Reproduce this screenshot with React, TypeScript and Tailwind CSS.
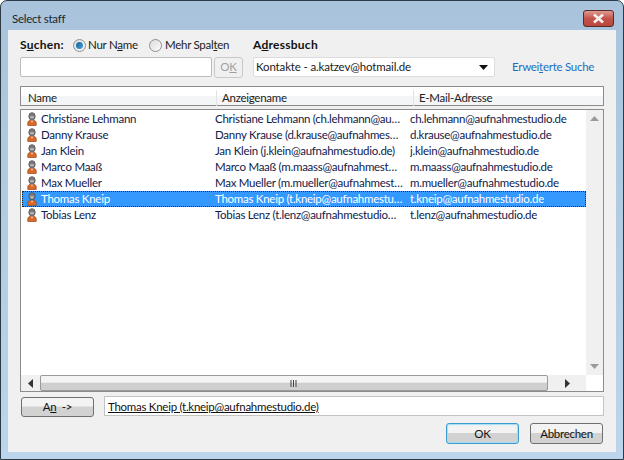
import React from "react";

const rows = [
  ["Christiane Lehmann", "Christiane Lehmann (ch.lehmann@au…", "ch.lehmann@aufnahmestudio.de"],
  ["Danny Krause", "Danny Krause (d.krause@aufnahmes…", "d.krause@aufnahmestudio.de"],
  ["Jan Klein", "Jan Klein (j.klein@aufnahmestudio.de)", "j.klein@aufnahmestudio.de"],
  ["Marco Maaß", "Marco Maaß (m.maass@aufnahmest…", "m.maass@aufnahmestudio.de"],
  ["Max Mueller", "Max Mueller (m.mueller@aufnahmest…", "m.mueller@aufnahmestudio.de"],
  ["Thomas Kneip", "Thomas Kneip (t.kneip@aufnahmestu…", "t.kneip@aufnahmestudio.de"],
  ["Tobias Lenz", "Tobias Lenz (t.lenz@aufnahmestudio…", "t.lenz@aufnahmestudio.de"],
];

function Person() {
  return (
    <svg width="12" height="14" viewBox="0 0 12 15" className="shrink-0">
      <path d="M1.5 14.5 V11.5 C1.5 9.8 3 9 4.5 8.8 H7.5 C9 9 10.5 9.8 10.5 11.5 V14.5 Z" fill="#d9682a" stroke="#9c4a1c" strokeWidth="0.8" />
      <path d="M5 9 L6 12 L7 9 Z" fill="#f6d9c0" />
      <ellipse cx="6" cy="4.6" rx="3.4" ry="3.9" fill="#7c7c7c" stroke="#4d4d4d" strokeWidth="0.8" />
      <path d="M4 5.5 C4.6 7.6 7.4 7.6 8 5.5 L8 4.6 H4 Z" fill="#b9b9b9" />
    </svg>
  );
}

function Radio({ checked }: { checked?: boolean }) {
  return (
    <span className="flex h-[13px] w-[13px] shrink-0 items-center justify-center rounded-full border border-[#8e8f8f] bg-gradient-to-br from-[#dcdcdc] to-[#fbfbfb]">
      {checked && <span className="h-[7px] w-[7px] rounded-full bg-gradient-to-br from-[#0f5f9c] to-[#4ba3dc]" />}
    </span>
  );
}

function Btn({ children, className }: { children: React.ReactNode; className: string }) {
  return (
    <div className={"flex items-center justify-center rounded-[3px] border bg-gradient-to-b from-[#f3f3f3] from-45% to-[#d2d2d2] to-50% " + className}>
      {children}
    </div>
  );
}

export default function App() {
  return (
    <div
      className="flex h-[460px] w-[624px] flex-col overflow-hidden rounded-t-[7px] border border-[#2b3a45] bg-gradient-to-b from-[#a9c3dc] to-[#bcd5ec] text-[11.5px] leading-[16px] text-[#1a1a1a]"
      style={{ fontFamily: 'Lato, "Open Sans", sans-serif', letterSpacing: "-0.27px" }}
    >
      <div className="flex h-[29px] shrink-0 items-start justify-between pl-[11px] pr-[9px]">
        <span className="mt-[10px] text-[#1c2630]">Select staff</span>
        <div className="mt-[9px] flex h-[17px] w-[31px] items-center justify-center rounded-[3px] border border-[#5a2a28] bg-gradient-to-b from-[#dc9a90] via-[#c4544a] to-[#b8473c]">
          <svg width="13" height="11" viewBox="0 0 13 11">
            <path d="M2 1.5 L11 9.5 M11 1.5 L2 9.5" stroke="#f4f0ee" strokeWidth="2.8" />
          </svg>
        </div>
      </div>

      <div className="mx-[7px] flex h-[422px] shrink-0 flex-col bg-[#f0f0f0] pl-[12px] pr-[12px] pt-[7px]">
        <div className="flex h-[16px] items-center">
          <span className="w-[53px] text-[12px] font-bold tracking-[0.25px] text-[#111]">S<u>u</u>chen:</span>
          <span className="flex w-[76px] items-center gap-[2px]"><Radio checked /><span>Nur N<u>a</u>me</span></span>
          <span className="flex w-[104px] items-center gap-[3px]"><Radio /><span className="text-[#222]">Mehr Spal<u>t</u>en</span></span>
          <span className="text-[12px] font-bold tracking-[0.25px] text-[#111]">A<u>d</u>ressbuch</span>
        </div>

        <div className="mt-[3px] flex h-[22px] items-center">
          <div className="h-[20px] w-[192px] rounded-[2px] border border-[#bdbdbd] bg-white" />
          <Btn className="ml-[2px] h-[21px] w-[29px] border-[#c9c9c9] !bg-none bg-[#f0f0f0] text-[#a0a0a0]">O<u>K</u></Btn>
          <div className="ml-[10px] flex h-[20px] w-[242px] items-center justify-between rounded-[2px] border border-[#dcdcdc] bg-white pl-[2px] pr-[6px]">
            <span className="tracking-[-0.15px]">Kontakte - a.katzev@hotmail.de</span>
            <svg width="9" height="5" viewBox="0 0 9 5"><path d="M0 0 H9 L4.5 5 Z" fill="#111" /></svg>
          </div>
          <span className="ml-[17px] text-[#1a6fc4]">Erwei<u>t</u>erte Suche</span>
        </div>

        <div className="mt-[8px] flex h-[20px] w-[584px] items-center border border-[#8c8c8c] bg-gradient-to-b from-white from-50% to-[#f3f5f7] to-50% pt-[3px] text-[#222]">
          <span className="w-[195px] pl-[7px]">Name</span>
          <span className="w-[197px] border-l border-[#e3e3e3] pl-[5px]">Anzeigename</span>
          <span className="flex-1 border-l border-[#e3e3e3] pl-[5px]">E-Mail-Adresse</span>
        </div>

        <div className="mt-[3px] flex h-[283px] w-[584px] flex-col border border-[#8c8c8c] bg-white">
          <div className="flex min-h-0 flex-1">
            <div className="min-w-0 flex-1 pt-[1px] text-[#10204a]">
              {rows.map((r, i) => {
                const sel = i === 5;
                return (
                  <div
                    key={r[0]}
                    className={
                      "ml-[1px] flex h-[16px] items-center whitespace-nowrap " +
                      (sel ? "bg-[#3399ff] text-white outline-1 outline-dotted outline-offset-[-1px] outline-[#3a2000]" : "")
                    }
                  >
                    <div className="flex w-[193px] items-center gap-[3px] pl-[4px]">
                      <Person />
                      <span>{r[0]}</span>
                    </div>
                    <span className="w-[195px] overflow-hidden">{r[1]}</span>
                    <span className="overflow-hidden">{r[2]}</span>
                  </div>
                );
              })}
            </div>
            <div className="flex w-[17px] shrink-0 flex-col items-center justify-between bg-[#f0f0f0] py-[6px]">
              <svg width="9" height="5" viewBox="0 0 9 5"><path d="M0 5 L4.5 0 L9 5 Z" fill="#9a9a9a" /></svg>
              <svg width="9" height="5" viewBox="0 0 9 5"><path d="M0 0 H9 L4.5 5 Z" fill="#9a9a9a" /></svg>
            </div>
          </div>
          <div className="flex h-[16px] w-[565px] shrink-0 items-center bg-[#f0f0f0]">
            <div className="flex w-[19px] justify-center">
              <svg width="5" height="9" viewBox="0 0 5 9"><path d="M5 0 V9 L0 4.5 Z" fill="#333" /></svg>
            </div>
            <div className="flex h-full w-[508px] items-center justify-center rounded-[2px] border border-[#9a9a9a] bg-gradient-to-b from-[#f4f4f4] from-45% to-[#cfcfcf] to-50%">
              <svg width="8" height="7" viewBox="0 0 8 7"><path d="M1 0 V7 M3.5 0 V7 M6 0 V7" stroke="#444" strokeWidth="1" /></svg>
            </div>
            <div className="flex flex-1 justify-center">
              <svg width="5" height="9" viewBox="0 0 5 9"><path d="M0 0 V9 L5 4.5 Z" fill="#333" /></svg>
            </div>
          </div>
        </div>

        <div className="mt-[4px] flex h-[21px] items-start">
          <Btn className="ml-[1px] mt-[1px] h-[20px] w-[73px] border-[#707070] text-[#111]">A<u>n</u>&nbsp; -&gt;</Btn>
          <div className="ml-[10px] h-[20px] w-[500px] border border-[#c4c4c4] bg-white pl-[3px] leading-[20px] text-[#111] underline">
            Thomas Kneip (t.kneip@aufnahmestudio.de)
          </div>
        </div>

        <div className="mt-[6px] flex justify-end gap-[11px] pr-[1px]">
          <Btn className="h-[21px] w-[73px] border-[#3c9ccf] text-[#111] shadow-[inset_0_0_1px_1px_#a5dcf5]">OK</Btn>
          <Btn className="h-[21px] w-[73px] border-[#707070] text-[#111]">Abbrechen</Btn>
        </div>
      </div>
    </div>
  );
}
